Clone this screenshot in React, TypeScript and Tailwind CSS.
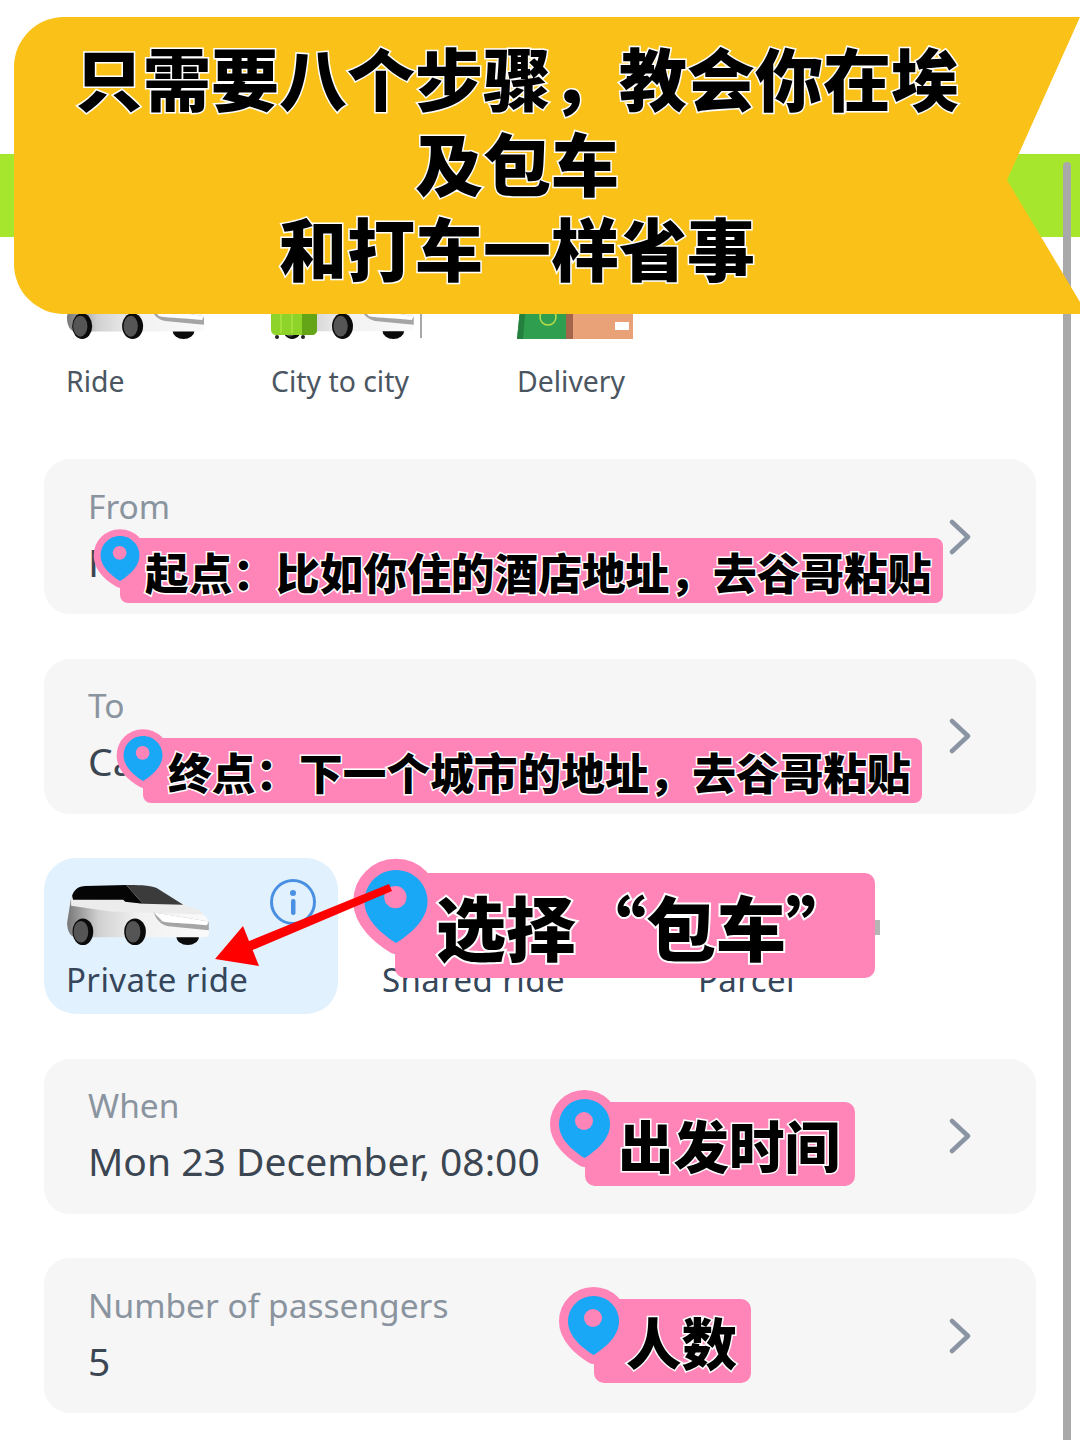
import type { ReactNode } from 'react';

const stickerText =
  "font-['Noto_Sans_CJK_SC',sans-serif] font-black text-black whitespace-nowrap [paint-order:stroke_fill]";

function CarShape({ id }: { id: string }) {
  return (
    <g>
      <defs>
        <linearGradient id={id} x1="0" x2="1" y1="0" y2="0">
          <stop offset="0" stopColor="#777" />
          <stop offset="0.22" stopColor="#d0d0d0" />
          <stop offset="0.5" stopColor="#f1f1f1" />
          <stop offset="1" stopColor="#fafafa" />
        </linearGradient>
      </defs>
      {/* front wheel sits behind the body */}
      <ellipse cx="123.5" cy="52" rx="11.5" ry="9" fill="#0b0b0b" />
      <path d="M1 38 L5 13 L60 16 L118 20 C132 23 144 30 145 40 L145 50 C145 52 143 53 140 53 L10 53 C4 53 1 46 1 38Z" fill={`url(#${id})`} />
      <path d="M5 13 L60 16 L118 20 C128 22 136 25 141 30 L45 27 L5 21Z" fill="#ececec" />
      <path d="M6 11 C8 5 12 1 20 1 L61 0 L78 19 L60 17 L58 15 L7 15Z" fill="#050505" />
      <path d="M61 0 C72 0 84 0 92 3 L119 20 L78 19Z" fill="#3b3b3b" />
      <path d="M89 28 C92 36 96 40 104 42 L145 46 L145 37Z" fill="#a5a5a5" />
      <path d="M89 28 L145 37 L143 41 C128 39 110 39 98 37Z" fill="#ffffff" />
      <ellipse cx="17" cy="47.5" rx="10.5" ry="13.5" fill="#0b0b0b" />
      <ellipse cx="15" cy="47.5" rx="7.5" ry="11" fill="#555" />
      <ellipse cx="70" cy="47.5" rx="11" ry="13.5" fill="#0b0b0b" />
      <ellipse cx="68" cy="47.5" rx="7.5" ry="11" fill="#555" />
    </g>
  );
}

function Pin({ className }: { className: string }) {
  return (
    <svg viewBox="0 0 51 59" className={`absolute overflow-visible ${className}`}>
      <path
        d="M25.5 0C39.6 0 51 11.4 51 25.5C51 40 37 52 25.5 59C14 52 0 40 0 25.5C0 11.4 11.4 0 25.5 0Z"
        fill="#ff84b8"
        stroke="#ff84b8"
        strokeWidth="18"
        strokeLinejoin="round"
      />
      <path
        d="M25.5 0C39.6 0 51 11.4 51 25.5C51 40 37 52 25.5 59C14 52 0 40 0 25.5C0 11.4 11.4 0 25.5 0Z"
        fill="#18a8f5"
      />
      <circle cx="25" cy="22" r="9" fill="#ff84b8" />
    </svg>
  );
}

function Sticker({
  className,
  pinClassName,
  textClassName,
  children,
}: {
  className: string;
  pinClassName: string;
  textClassName: string;
  children: ReactNode;
}) {
  return (
    <div className={`absolute flex items-center bg-[#ff84b8] ${className}`}>
      <Pin className={pinClassName} />
      <span className={`relative ${stickerText} ${textClassName}`}>{children}</span>
    </div>
  );
}

function Field({ label, value }: { label: string; value: string }) {
  return (
    <div className="flex h-[155px] items-center justify-between rounded-[26px] bg-[#f6f6f7] pl-[44px] pr-[65px]">
      <div className="flex flex-col">
        <span className="text-[33.5px] leading-[44px] text-[#8a949f]">{label}</span>
        <span className="mt-[6px] text-[39px] leading-[56px] text-[#3b4652]">{value}</span>
      </div>
      <svg viewBox="0 0 22 36" className="h-[36px] w-[22px]" fill="none" stroke="#8a94a3" strokeWidth="4.5" strokeLinecap="round" strokeLinejoin="round">
        <path d="M3 3L19 18L3 33" />
      </svg>
    </div>
  );
}

export default function App() {
  return (
    <div className="relative h-[1440px] w-[1080px] overflow-hidden bg-white font-['Noto_Sans',sans-serif]">
      {/* app header band */}
      <div className="mt-[154px] h-[83px] bg-[#a6e72e]" />

      {/* services */}
      <div className="mt-[43px] flex pl-[66px] text-[28.4px] leading-[40px] text-[#4b5661]">
        <div className="w-[205px]">
          <svg viewBox="0 0 145 62" className="mt-[1px] h-[59px] w-[138px]">
            <CarShape id="ride-car" />
          </svg>
          <div className="mt-[21px]">Ride</div>
        </div>
        <div className="w-[246px]">
          <svg viewBox="0 0 153 60" className="h-[60px] w-[153px]">
            <g transform="translate(5 1) scale(0.95)">
              <CarShape id="city-car" />
            </g>
            <rect x="149" y="25" width="2" height="33" fill="#a8a8a8" />
            <circle cx="6" cy="57" r="2" fill="#222" />
            <circle cx="32" cy="57" r="2" fill="#222" />
            <path d="M0 10H46V49C46 53 44 55 40 55H6C2 55 0 53 0 49Z" fill="#8ed32a" />
            <path d="M31 10H46V49C46 53 44 55 40 55H31Z" fill="#63a516" />
            <rect x="9" y="10" width="2" height="43" fill="#a4e03c" />
            <rect x="20" y="10" width="2" height="43" fill="#a4e03c" />
          </svg>
          <div className="mt-[21px]">City to city</div>
        </div>
        <div>
          <svg viewBox="0 0 116 60" className="h-[60px] w-[116px]">
            <path d="M6 0H52V59H0Z" fill="#2f9e4f" />
            <path d="M6 0H11L6 59H0Z" fill="#23803e" />
            <circle cx="31" cy="37" r="8" fill="none" stroke="#b9e04a" strokeWidth="1.5" />
            <rect x="49" y="0" width="8" height="59" fill="#a5654a" />
            <rect x="56" y="0" width="60" height="59" fill="#e9a277" />
            <rect x="98" y="42" width="14" height="8" fill="#ffffff" />
          </svg>
          <div className="mt-[21px]">Delivery</div>
        </div>
      </div>

      {/* form */}
      <div className="ml-[44px] mt-[58px] flex w-[992px] flex-col gap-[44.5px]">
        <Field label="From" value="Hurghada" />
        <Field label="To" value="Cairo" />

        <div className="flex gap-[22px] text-[33px] leading-[44px] tracking-[0.4px] text-[#36465a]">
          <div className="relative h-[156px] w-[294px] rounded-[32px] bg-[#e1f1fe] pl-[22px] pt-[27px]">
            <svg viewBox="0 0 145 62" className="ml-[-1px] h-[61px] w-[145px]">
              <CarShape id="private-car" />
            </svg>
            <svg viewBox="0 0 46 46" className="absolute left-[226px] top-[21px] h-[46px] w-[46px]">
              <circle cx="23" cy="23" r="21.5" fill="none" stroke="#4a90e2" strokeWidth="3" />
              <circle cx="23" cy="14" r="3" fill="#4a90e2" />
              <rect x="21" y="20" width="4.5" height="16" rx="2.2" fill="#4a90e2" />
            </svg>
            <div className="mt-[12px]">Private ride</div>
          </div>
          <div className="h-[156px] w-[294px] pl-[22px] pt-[100px]">Shared ride</div>
          <div className="relative h-[156px] w-[294px] pl-[22px] pt-[100px]">
            Parcel
            <div className="absolute left-[198px] top-[62px] h-[15px] w-[6px] bg-[#b5b5b5]" />
          </div>
        </div>

        <Field label="When" value="Mon 23 December, 08:00" />
        <Field label="Number of passengers" value="5" />
      </div>

      {/* scrollbar */}
      <div className="absolute bottom-0 left-[1063px] top-[162px] w-[8px] rounded-t-[4px] bg-[#a9a9a9]" />

      {/* annotation layer */}
      <Sticker
        className="left-[120px] top-[538px] h-[65px] w-[823px] rounded-[8px] pl-[25px]"
        pinClassName="left-[-20px] top-[-2px] h-[45px] w-[40px]"
        textClassName="text-[43.7px] leading-[60px] [-webkit-text-stroke:3px_white]"
      >
        起点：比如你住的酒店地址，去谷哥粘贴
      </Sticker>
      <Sticker
        className="left-[143px] top-[738px] h-[65px] w-[779px] rounded-[8px] pl-[25px]"
        pinClassName="left-[-20px] top-[-2px] h-[45px] w-[40px]"
        textClassName="text-[43.7px] leading-[60px] [-webkit-text-stroke:3px_white]"
      >
        终点：下一个城市的地址，去谷哥粘贴
      </Sticker>
      <Sticker
        className="left-[395px] top-[873px] h-[105px] w-[480px] rounded-[10px] pl-[41px]"
        pinClassName="left-[-31px] top-[-3px] h-[73px] w-[64px]"
        textClassName="text-[70px] leading-[90px] [-webkit-text-stroke:4px_white]"
      >
        选择“包车”
      </Sticker>
      <Sticker
        className="left-[585px] top-[1102px] h-[84px] w-[270px] rounded-[10px] pl-[33px]"
        pinClassName="left-[-26px] top-[-3px] h-[59px] w-[51px]"
        textClassName="text-[55.5px] leading-[70px] [-webkit-text-stroke:3px_white]"
      >
        出发时间
      </Sticker>
      <Sticker
        className="left-[594px] top-[1299px] h-[84px] w-[157px] rounded-[10px] pl-[32px]"
        pinClassName="left-[-26px] top-[-3px] h-[59px] w-[51px]"
        textClassName="text-[55.5px] leading-[70px] [-webkit-text-stroke:3px_white]"
      >
        人数
      </Sticker>

      {/* red arrow */}
      <svg viewBox="0 0 1080 1440" className="absolute left-0 top-0 h-[1440px] w-[1080px]" fill="#ff0000">
        <path d="M389 884L392 891L248 952L242 944Z" />
        <path d="M215 959L243 926L259 966Z" />
      </svg>

      {/* title ribbon */}
      <div className="absolute left-[14px] top-[17px] flex h-[297px] w-[1066px] items-center rounded-l-[50px] bg-[#fac118] pb-[8px] [clip-path:polygon(0_0,1066px_0,993px_163px,1066px_285px,1066px_297px,0_297px)]">
        <h1 className={`w-[1006px] text-center text-[68px] leading-[85px] ${stickerText} [-webkit-text-stroke:3px_white]`}>
          只需要八个步骤，教会你在埃
          <br />
          及包车
          <br />
          和打车一样省事
        </h1>
      </div>
    </div>
  );
}
